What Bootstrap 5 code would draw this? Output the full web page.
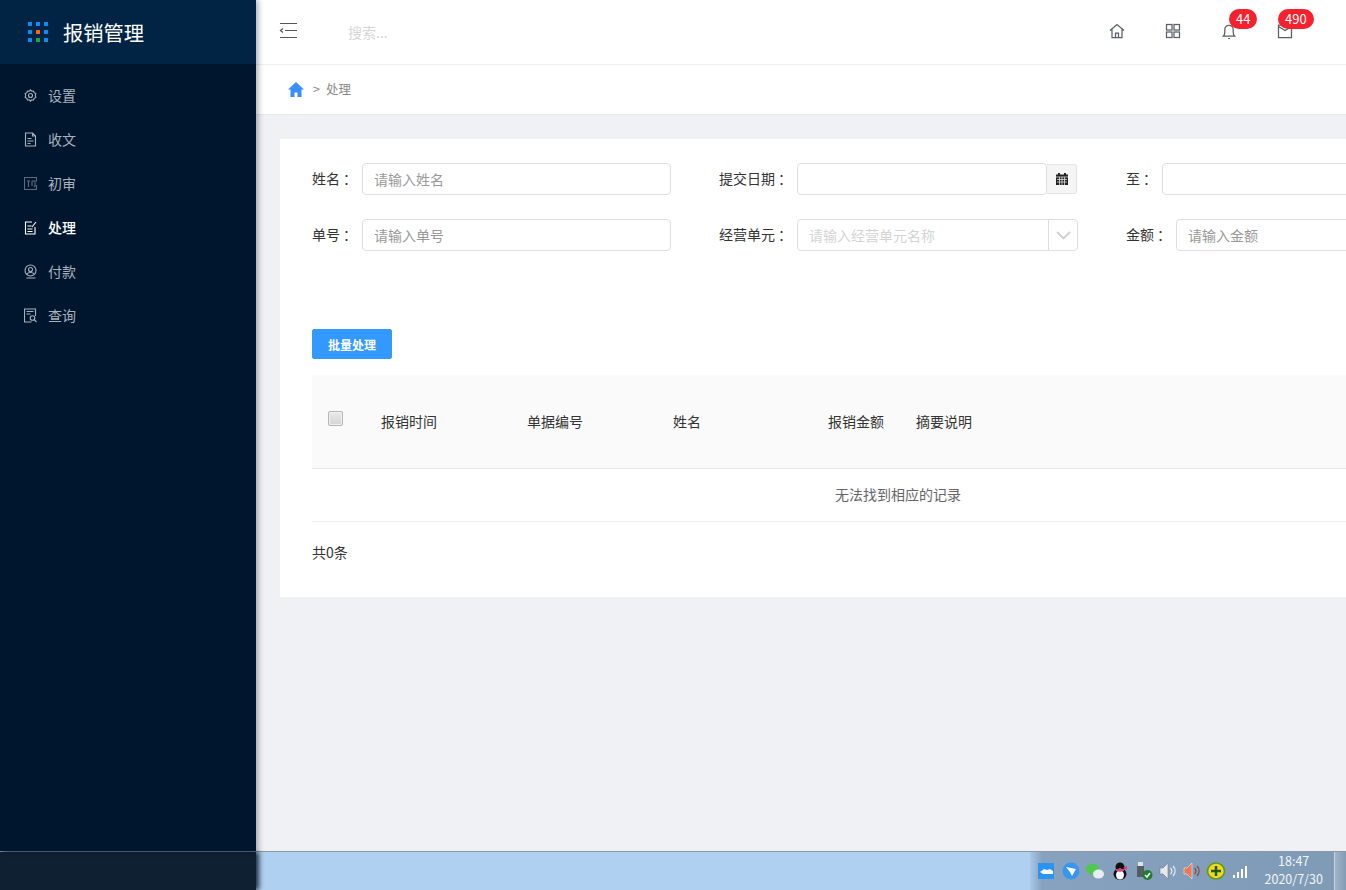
<!DOCTYPE html>
<html lang="zh">
<head>
<meta charset="utf-8">
<title>报销管理</title>
<link href="https://cdn.jsdelivr.net/npm/bootstrap@5.3.0/dist/css/bootstrap.min.css" rel="stylesheet">
<style>
html,body{height:100%;margin:0;overflow:hidden}
body{font-family:"Noto Sans CJK SC","Liberation Sans",sans-serif;font-size:14px;color:#333;background:#f0f1f5}
.app-shell{height:890px;width:1346px;overflow:hidden}
.app-main{height:851px;min-height:0}
.side-bar{width:256px;flex:0 0 256px;background:#00162e;box-shadow:2px 0 6px rgba(0,0,0,.35);position:relative;z-index:3}
.side-brand{height:64px;background:#012344;padding-left:28px;gap:15px;color:#fff;font-size:20.3px}
.side-menu{margin:0;list-style:none;padding:10px 0 0}
.side-link{height:44px;padding:0 0 2px 24px;gap:11px;color:#a9b2bb;font-size:14px;text-decoration:none}
.side-link.is-on{color:#fff;font-weight:500}
.side-link svg{width:13px;height:15px;flex:none;stroke:currentColor;fill:none;stroke-width:1.1}
.work-pane{flex:1 1 auto;min-width:0;overflow:hidden}
.top-strip{height:65px;background:#fff;border-bottom:1px solid #eceef2;box-shadow:0 1px 3px rgba(0,0,0,.04);padding-left:23px;padding-right:33px}
.menu-toggle{width:19px;height:17px;flex:none;margin-top:-3px}
.top-search{border:0;outline:0;background:transparent;margin-left:50px;width:200px;font-size:14px;padding:0;margin-top:1px}
.top-search::placeholder{color:#d6d6d6}
.top-tool{width:56px;height:32px;margin-top:-2px}
.top-tool svg{width:16px;height:16px;stroke:#5a5f66;fill:none;stroke-width:1.25}
.count-pill{position:absolute;top:-6px;background:#f5222d;color:#fff;font-size:13px;font-weight:400;line-height:20px;height:20px;padding:0 7px;border-radius:10px}
.crumb-strip{height:50px;background:#fff;border-bottom:1px solid #e6e8ec;padding:0 0 0 32px;font-size:12.5px;color:#8a8a8a;gap:9px}
.crumb-now{margin-left:-3px}
.page-body{padding:24px 0 0 24px;width:1248px}
.panel-box{background:#fff;padding:24px 20px 0 32px;height:458px}
.field-row{gap:48px;margin-bottom:24px}
.field-item{width:359px;flex:none;height:32px}
.field-label{color:#333;font-size:14px;white-space:nowrap;flex:none;margin-top:-1px}
.colon-mark{font-family:"Noto Sans CJK TC",sans-serif;margin-left:3px}
.label-2{width:50px}.label-4{width:78px}.label-1{width:36px}
.text-box{flex:1 1 auto;min-width:0;height:32px;border:1px solid #dcdee2;border-radius:4px;padding:0 11px;font-size:14px;background:#fff;outline:0}
.text-box::placeholder{color:#999}
.wide-box{flex:none;width:281px}
.date-box{flex:none;width:250px}
.date-addon{width:30px;height:30px;background:#f5f5f5;border:1px solid #e4e4e4;border-left:0;border-radius:0 3px 3px 0;flex:none}
.pick-box{width:281px;height:32px;border:1px solid #dcdee2;border-radius:4px;flex:none}
.pick-text{flex:1 1 auto;padding-left:11px;color:#d4d4d4;font-size:14px}
.pick-arrow{width:29px;border-left:1px solid #dcdee2;height:100%}
.go-btn{background:#3399ff;border:1px solid #3399ff;color:#fff;font-size:12px;font-weight:700;width:80px;height:30px;padding:1px 0 0;margin-top:78px;border-radius:2px;display:block;line-height:28px}
.go-btn:hover{background:#3399ff;color:#fff}
.data-grid{width:1172px;table-layout:fixed;margin:16px 0 0;font-size:14px;color:#333}
.data-grid th{background:#fafafa;font-weight:400;height:93px;padding:0;vertical-align:middle;border-bottom:1px solid #e8e8e8;color:#333}
.data-grid td{height:53px;text-align:center;color:#666;padding:0;vertical-align:middle;border-bottom:1px solid #eee}
.tick-box{display:block;width:15px;height:15px;margin:-5px 0 0 16px;border:1px solid #b5b5b5;border-radius:2px;background:linear-gradient(#e9e9e9,#d4d4d4);box-shadow:inset 0 0 0 1px #f0f0f0;appearance:none}
.total-line{margin-top:20px;font-size:14px;color:#333}
.task-bar{height:39px;background:#b0d0f2;border-top:1px solid #8d98a5;box-shadow:0 -1px 0 #eef0f3}
.task-dark{width:256px;flex:none;background:#102033;box-shadow:3px 0 5px #1d2e44}
.tray-zone{margin-left:auto;width:316px;background:linear-gradient(90deg,#a9c8e9 0,#86a2bf 12px,#7f9ab5 100%);padding-left:5px;flex:none}
.tray-slot{width:24.2px;height:24px;flex:none}
.tray-slot svg{width:20px;height:20px}
.tray-clock{width:80px;margin-left:1px;color:#f3f6f9;font-size:12.5px;line-height:18px;text-align:center;flex:none;margin-top:-2px}
.desk-peek{width:14px;flex:none;margin-left:auto;background:linear-gradient(90deg,#9fb4c8,#7e97b0);border-left:1px solid #c8d4e0}
</style>
</head>
<body>
<div class="app-shell d-flex flex-column">
  <div class="app-main d-flex">
    <aside class="side-bar">
      <div class="side-brand d-flex align-items-center">
        <svg width="20" height="20" viewBox="0 0 20 20" aria-hidden="true">
          <g fill="#0a8cf5"><rect width="4" height="4"/><rect x="8" width="4" height="4"/><rect x="16" width="4" height="4"/><rect y="8" width="4" height="4"/><rect x="16" y="8" width="4" height="4"/><rect y="16" width="4" height="4"/><rect x="16" y="16" width="4" height="4"/></g>
          <rect x="8" y="8" width="4" height="4" fill="#f06a0f"/><rect x="8" y="16" width="4" height="4" fill="#1fa33a"/>
        </svg>
        <span>报销管理</span>
      </div>
      <ul class="side-menu">
        <li><a class="side-link d-flex align-items-center" href="#"><svg viewBox="0 0 13 15"><circle cx="6.500" cy="7.500" r="2"/><path d="M6.500 1.800l1.200 1.400 1.800-.2.700 1.700 1.600.9-.5 1.900.5 1.900-1.600.9-.7 1.700-1.800-.2-1.200 1.400-1.200-1.400-1.800.2-.7-1.700-1.600-.9.5-1.900-.5-1.900 1.600-.9.700-1.700 1.800.2z"/></svg><span>设置</span></a></li>
        <li><a class="side-link d-flex align-items-center" href="#"><svg viewBox="0 0 13 15"><path d="M1.500 1h7l3 3v10h-10zM8.500 1v3h3M3.500 6.500h4M3.500 9h6M3.500 11.500h3"/></svg><span>收文</span></a></li>
        <li><a class="side-link d-flex align-items-center" href="#"><svg viewBox="0 0 13 15" opacity=".55"><path d="M12.500 9v4.500h-12v-12h12v4"/><path d="M3 5h3M4.500 5v6M8 5v5M8 5h3v5l-1 1"/></svg><span>初审</span></a></li>
        <li><a class="side-link is-on d-flex align-items-center" href="#"><svg viewBox="0 0 13 15"><path d="M8 2H1.500v12h9.500V7M3.500 6h4M3.500 9h5M3.500 11.500h5M8 7l4-5"/></svg><span>处理</span></a></li>
        <li><a class="side-link d-flex align-items-center" href="#"><svg viewBox="0 0 13 15"><circle cx="6.500" cy="6.500" r="5.500"/><circle cx="6.500" cy="5.500" r="2"/><path d="M3 10c1-2 6-2 7 0M2.500 14h9"/></svg><span>付款</span></a></li>
        <li><a class="side-link d-flex align-items-center" href="#"><svg viewBox="0 0 13 15"><path d="M11.500 8V1h-11v13h7M2.500 3.500h7M2.500 6h4"/><circle cx="8.500" cy="10" r="2.300"/><path d="M10.200 11.700l2.300 2.300"/></svg><span>查询</span></a></li>
      </ul>
    </aside>
    <div class="work-pane">
      <header class="top-strip d-flex align-items-center">
        <svg class="menu-toggle" viewBox="0 0 19 17" fill="none" stroke="#555" stroke-width="1.200" aria-hidden="true"><path d="M1 1.500h17M6 8.500h12M1 15.500h17M4 6.500L1.500 8.500 4 10.500"/></svg>
        <input class="top-search" type="text" placeholder="搜索...">
        <div class="d-flex ms-auto">
          <div class="top-tool d-flex align-items-center justify-content-center"><svg viewBox="0 0 16 16"><path d="M1 7.500L8 1.500l7 6M3 6.500V14.500h10V6.500M6.500 14.500V10h3v4.500"/></svg></div>
          <div class="top-tool d-flex align-items-center justify-content-center"><svg viewBox="0 0 16 16"><rect x="1.500" y="1.500" width="5.500" height="5.500"/><rect x="9" y="1.500" width="5.500" height="5.500"/><rect x="1.500" y="9" width="5.500" height="5.500"/><rect x="9" y="9" width="5.500" height="5.500"/></svg></div>
          <div class="top-tool d-flex align-items-center justify-content-center position-relative"><svg viewBox="0 0 16 16"><path d="M2.500 13c1-1 1.300-2 1.300-4V6.500a4.200 4.200 0 018.400 0V9c0 2 .3 3 1.300 4zM7 15.500h2"/></svg><span class="count-pill" style="left:28px">44</span></div>
          <div class="top-tool d-flex align-items-center justify-content-center position-relative"><svg viewBox="0 0 16 16"><path d="M1.500 2h13v12.500h-13zM1.500 3.500l6.500 4 6.500-4"/></svg><span class="count-pill" style="left:21px">490</span></div>
        </div>
      </header>
      <div class="crumb-strip d-flex align-items-center">
        <svg width="16" height="15" viewBox="0 0 16 15" aria-hidden="true"><path fill="#3a8ef6" d="M8 0L0 7.500h2.500V15h4v-4.500h3V15h4V7.500H16z"/></svg>
        <span>&gt;</span><span class="crumb-now">处理</span>
      </div>
      <main class="page-body">
        <section class="panel-box">
          <div class="field-row d-flex">
            <div class="field-item d-flex align-items-center"><label class="field-label label-2">姓名<span class="colon-mark">：</span></label><input class="text-box" placeholder="请输入姓名"></div>
            <div class="field-item d-flex align-items-center"><label class="field-label label-4">提交日期<span class="colon-mark">：</span></label><input class="text-box date-box"><div class="date-addon d-flex align-items-center justify-content-center"><svg width="12" height="12" viewBox="0 0 12 12" aria-hidden="true"><path fill="#222" d="M2 0h2v1.500H8V0h2v1.500h2V12H0V1.500h2z"/><path stroke="#f5f5f5" stroke-width=".7" d="M0 4h12M1 6.500h10M1 9h10M3.500 4v8M6 4v8M8.500 4v8"/></svg></div></div>
            <div class="field-item d-flex align-items-center"><label class="field-label label-1">至<span class="colon-mark">：</span></label><input class="text-box wide-box"></div>
          </div>
          <div class="field-row d-flex">
            <div class="field-item d-flex align-items-center"><label class="field-label label-2">单号<span class="colon-mark">：</span></label><input class="text-box" placeholder="请输入单号"></div>
            <div class="field-item d-flex align-items-center"><label class="field-label label-4">经营单元<span class="colon-mark">：</span></label><div class="pick-box d-flex align-items-center"><span class="pick-text">请输入经营单元名称</span><span class="pick-arrow d-flex align-items-center justify-content-center"><svg width="15" height="9" viewBox="0 0 15 9" fill="none" stroke="#d0d0d0" stroke-width="1.800" aria-hidden="true"><path d="M1 1l6.500 6.500L14 1"/></svg></span></div></div>
            <div class="field-item d-flex align-items-center"><label class="field-label label-2">金额<span class="colon-mark">：</span></label><input class="text-box wide-box" placeholder="请输入金额"></div>
          </div>
          <button class="btn go-btn" type="button">批量处理</button>
          <table class="table data-grid">
            <colgroup><col style="width:69px"><col style="width:146px"><col style="width:146px"><col style="width:155px"><col style="width:88px"><col></colgroup>
            <thead><tr><th><input class="tick-box" type="checkbox"></th><th>报销时间</th><th>单据编号</th><th>姓名</th><th>报销金额</th><th>摘要说明</th></tr></thead>
            <tbody><tr><td colspan="6">无法找到相应的记录</td></tr></tbody>
          </table>
          <div class="total-line">共0条</div>
        </section>
      </main>
    </div>
  </div>
  <footer class="task-bar d-flex">
    <div class="task-dark"></div>
    <div class="tray-zone d-flex align-items-center">
      <div class="tray-slot d-flex align-items-center justify-content-center"><svg viewBox="0 0 20 20"><rect x="1" y="2" width="16" height="16" fill="#2b93f0"/><path fill="#fff" d="M3 11l4-3 3 1 3-1 3 2v3H6z"/></svg></div>
      <div class="tray-slot d-flex align-items-center justify-content-center"><svg viewBox="0 0 20 20"><circle cx="10" cy="10" r="8.500" fill="#3596f3"/><path fill="#fff" d="M5 6l10 2-4 7-2-4z"/></svg></div>
      <div class="tray-slot d-flex align-items-center justify-content-center"><svg viewBox="0 0 20 20"><ellipse cx="7.500" cy="8" rx="6.500" ry="5.500" fill="#4fc84f"/><ellipse cx="13.500" cy="13" rx="5.500" ry="4.500" fill="#e9edf0"/></svg></div>
      <div class="tray-slot d-flex align-items-center justify-content-center"><svg viewBox="0 0 20 20"><ellipse cx="10" cy="13" rx="6.500" ry="6" fill="#111"/><ellipse cx="10" cy="14" rx="4" ry="4.500" fill="#fff"/><circle cx="10" cy="6" r="4.500" fill="#111"/><path fill="#e8328c" d="M6 8h8v2H6zM13 7l4-2v4z"/><path fill="#f5b400" d="M8.500 7h3l-1.500 1z"/></svg></div>
      <div class="tray-slot d-flex align-items-center justify-content-center"><svg viewBox="0 0 20 20"><rect x="4" y="1" width="5" height="4" fill="#dfe3e6"/><rect x="3" y="5" width="7" height="11" fill="#555c63"/><circle cx="13.500" cy="14" r="5" fill="#1f7d2c"/><path d="M11 14l2 2 3-4" fill="none" stroke="#fff" stroke-width="1.500"/></svg></div>
      <div class="tray-slot d-flex align-items-center justify-content-center"><svg viewBox="0 0 20 20"><path fill="#e6e9ec" stroke="#6f7c88" stroke-width=".6" d="M2 7h3l5-5v16l-5-5H2z"/><path d="M12.500 7a4 4 0 010 6M15 5a7 7 0 010 10" fill="none" stroke="#e6edf3" stroke-width="1.200"/></svg></div>
      <div class="tray-slot d-flex align-items-center justify-content-center"><svg viewBox="0 0 20 20"><path fill="#e8795a" stroke="#fff" stroke-width=".5" d="M2 7h3l5-5v16l-5-5H2z"/><path d="M12.500 7a4 4 0 010 6M15 5a7 7 0 010 10" fill="none" stroke="#8a4a3c" stroke-width="1.200"/></svg></div>
      <div class="tray-slot d-flex align-items-center justify-content-center"><svg viewBox="0 0 20 20"><ellipse cx="10" cy="10" rx="8.500" ry="8" fill="#f4d81c" stroke="#5c9a22" stroke-width="1.500"/><path d="M10 5v10M5 10h10" stroke="#1c5d17" stroke-width="2.500"/></svg></div>
      <div class="tray-slot d-flex align-items-center justify-content-center"><svg viewBox="0 0 20 20"><path fill="#fff" d="M2 14h2v3H2zM6 11h2v6H6zM10 8h2v9h-2zM14 5h2v12h-2z"/></svg></div>
      <div class="tray-clock"><div>18:47</div><div>2020/7/30</div></div>
      <div class="desk-peek align-self-stretch"></div>
    </div>
  </footer>
</div>
<script src="https://cdn.jsdelivr.net/npm/bootstrap@5.3.0/dist/js/bootstrap.bundle.min.js"></script>
</body>
</html>
